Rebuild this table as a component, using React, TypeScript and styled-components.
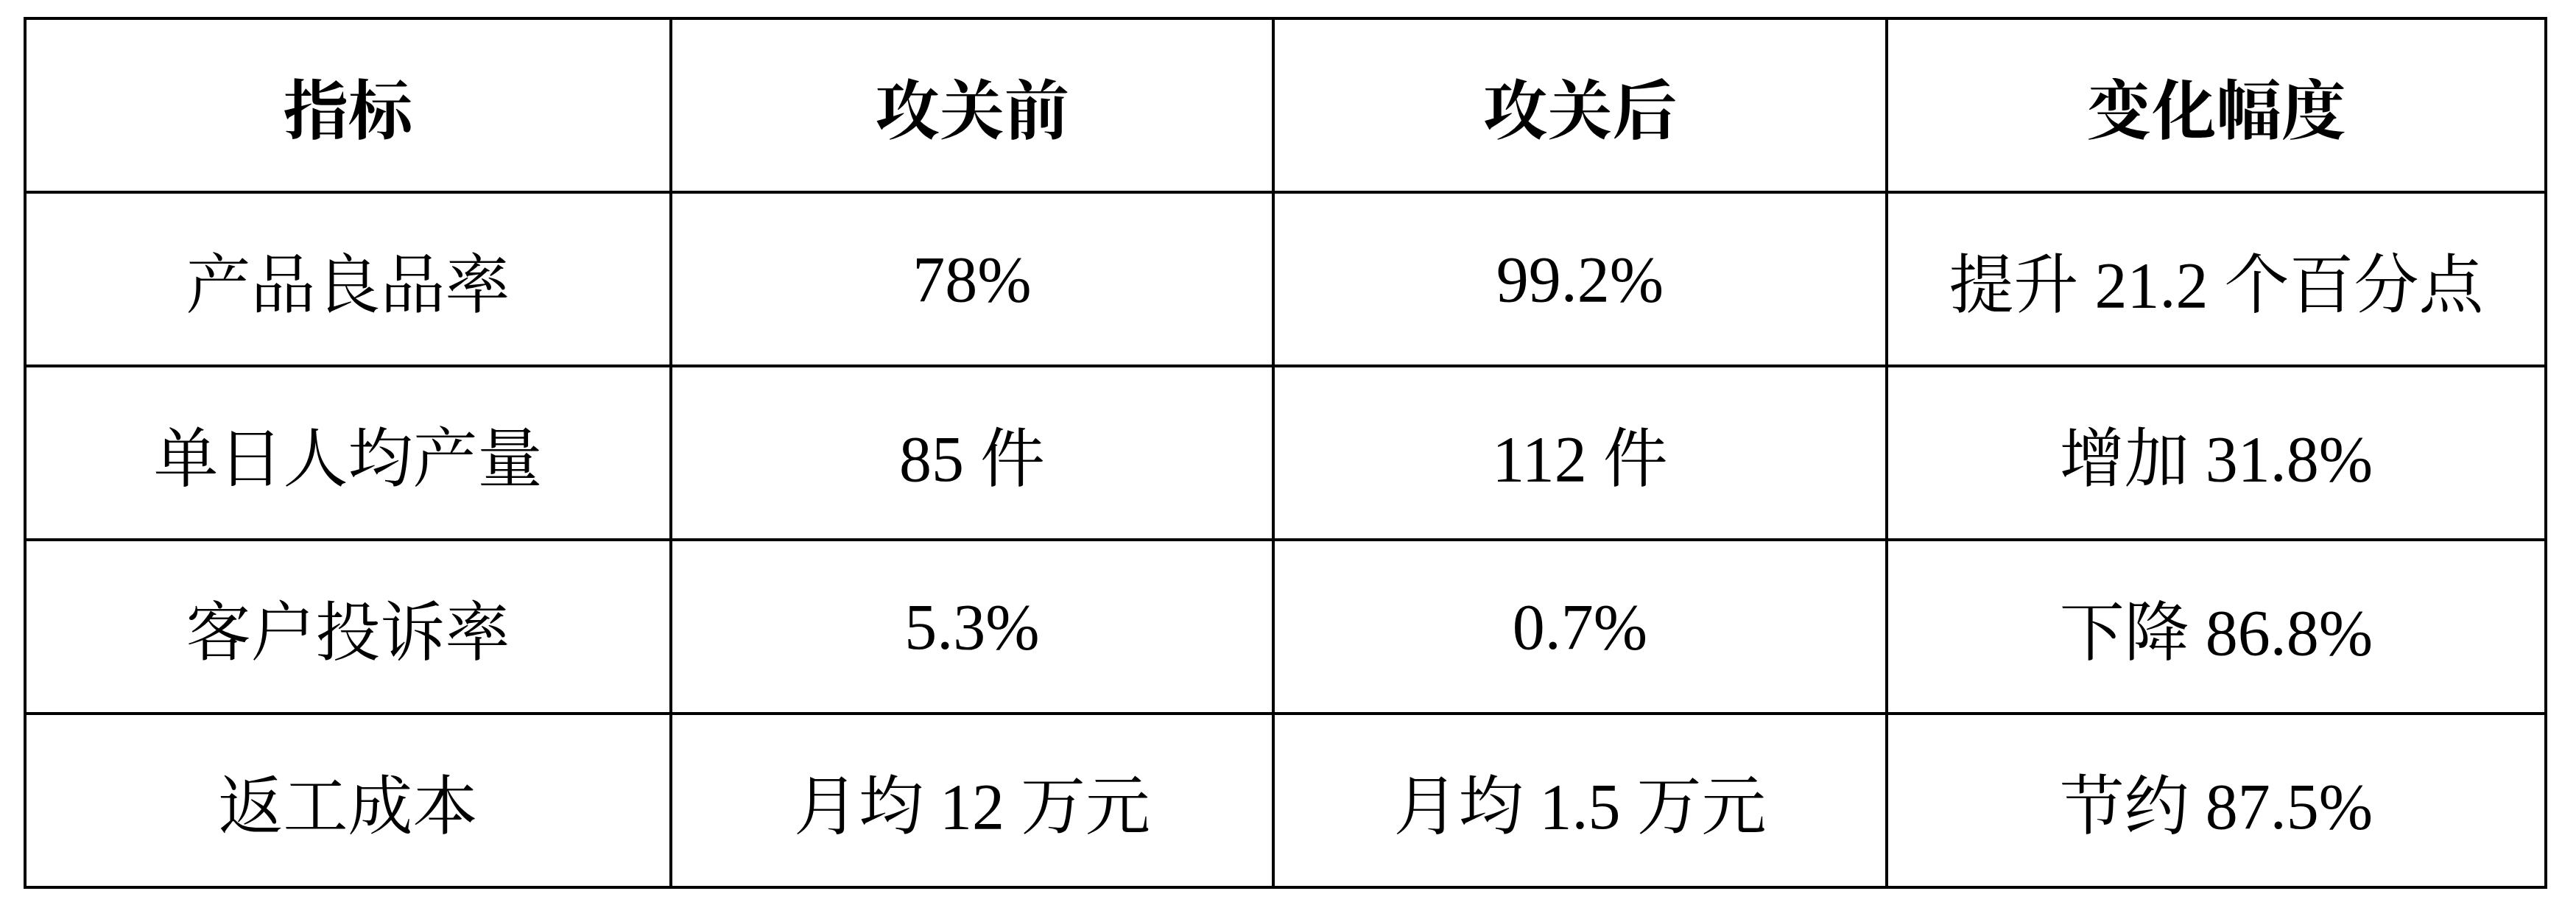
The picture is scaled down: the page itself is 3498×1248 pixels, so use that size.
import styled, { createGlobalStyle } from 'styled-components';

const GlobalStyle = createGlobalStyle`
  html, body {
    margin: 0;
    padding: 0;
    background: #ffffff;
  }
`;

const Page = styled.div`
  padding: 23px 0 0 32px;
`;

const Grid = styled.div`
  display: grid;
  grid-template-columns: 873px 814px 829px 891px;
  grid-auto-rows: 232px;
  gap: 4px;
  padding: 4px;
  width: max-content;
  background: #000000;
`;

const Cell = styled.div<{ $head?: boolean }>`
  display: flex;
  align-items: center;
  justify-content: center;
  background: #ffffff;
  color: #000000;
  font-family: 'Liberation Serif', 'Noto Serif CJK SC', 'Noto Sans CJK SC', serif;
  font-size: 88px;
  font-weight: ${({ $head }) => ($head ? 700 : 400)};
  white-space: pre;
`;

const header = ['指标', '攻关前', '攻关后', '变化幅度'];

const rows = [
  ['产品良品率', '78%', '99.2%', '提升 21.2 个百分点'],
  ['单日人均产量', '85 件', '112 件', '增加 31.8%'],
  ['客户投诉率', '5.3%', '0.7%', '下降 86.8%'],
  ['返工成本', '月均 12 万元', '月均 1.5 万元', '节约 87.5%'],
];

export default function App() {
  return (
    <>
      <GlobalStyle />
      <Page>
        <Grid>
          {header.map((h) => (
            <Cell key={h} $head>
              {h}
            </Cell>
          ))}
          {rows.map((row) =>
            row.map((text, i) => <Cell key={row[0] + i}>{text}</Cell>)
          )}
        </Grid>
      </Page>
    </>
  );
}
